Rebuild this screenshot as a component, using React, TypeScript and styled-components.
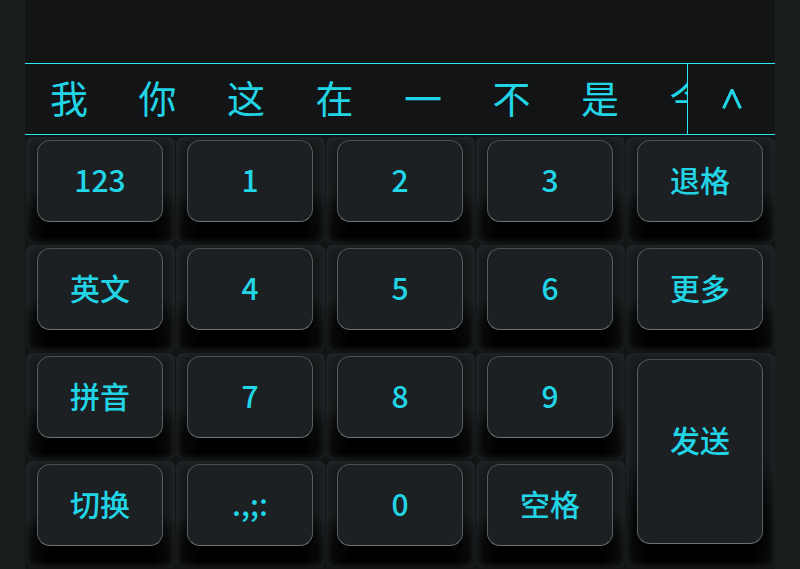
import React from "react";
import styled, { createGlobalStyle } from "styled-components";

const GlobalStyle = createGlobalStyle`
  html, body {
    margin: 0;
    padding: 0;
    background: #181d1d;
  }
  body {
    font-family: "Noto Sans CJK SC", "Noto Sans", sans-serif;
  }
`;

const Page = styled.div`
  width: 800px;
  height: 569px;
  display: flex;
  justify-content: center;
  background: #181d1d;
  overflow: hidden;
`;

const Panel = styled.div`
  width: 750px;
  height: 569px;
  background: #121416;
  display: flex;
  flex-direction: column;
`;

const TopSpace = styled.div`
  height: 63px;
`;

const CandidateBar = styled.div`
  height: 70px;
  border-top: 1px solid #2ae8ef;
  border-bottom: 1px solid #2ae8ef;
  display: flex;
`;

const CandidateList = styled.div`
  flex: 1;
  display: flex;
  align-items: center;
  gap: 50.5px;
  padding: 0 0 4px 25px;
  overflow: hidden;
  white-space: nowrap;
`;

const Candidate = styled.span`
  font-size: 38px;
  font-weight: 400;
  line-height: 1;
  color: #22d5e6;
  flex-shrink: 0;
`;

const ExpandButton = styled.div`
  width: 87px;
  border-left: 1px solid #2ae8ef;
  display: flex;
  align-items: center;
  justify-content: center;
  color: #22d5e6;
`;

const Keyboard = styled.div`
  flex: 1;
  padding: 2px 0 0 1px;
  display: grid;
  grid-template-columns: repeat(5, 149px);
  grid-template-rows: repeat(4, 107px);
  gap: 1px;
`;

const KeyCell = styled.div<{ $tall?: boolean }>`
  grid-row: ${({ $tall }) => ($tall ? "span 2" : "auto")};
  border-radius: 7px;
  background: radial-gradient(
    ellipse 68% 55% at 50% 90%,
    #000 50%,
    #0c0d0e 78%,
    #181b1c 100%
  );
  box-shadow: inset 0 0 9px rgba(42, 46, 48, 0.95);
  padding: ${({ $tall }) => ($tall ? "6px 12px 24px 11px" : "3px 12px 22px 11px")};
  display: flex;
`;

const KeyCap = styled.div<{ $tall?: boolean }>`
  flex: 1;
  border-radius: 13px;
  background: #1c2022;
  border: 1.5px solid #566061;
  border-bottom-color: #6a7574;
  border-top-color: #475051;
  display: flex;
  align-items: center;
  justify-content: center;
  padding-bottom: ${({ $tall }) => ($tall ? "26px" : "4px")};
  color: #22d5e6;
  font-size: 30px;
  font-weight: 500;
  line-height: 1;
  box-shadow: 0 2px 3px rgba(0, 0, 0, 0.6);
`;

const candidates = ["我", "你", "这", "在", "一", "不", "是", "今"];

type KeyDef = { label: string; tall?: boolean };

const keys: KeyDef[] = [
  { label: "123" },
  { label: "1" },
  { label: "2" },
  { label: "3" },
  { label: "退格" },
  { label: "英文" },
  { label: "4" },
  { label: "5" },
  { label: "6" },
  { label: "更多" },
  { label: "拼音" },
  { label: "7" },
  { label: "8" },
  { label: "9" },
  { label: "发送", tall: true },
  { label: "切换" },
  { label: ".,;:" },
  { label: "0" },
  { label: "空格" },
];

function ChevronUp() {
  return (
    <svg width="20" height="20" viewBox="0 0 20 20" fill="none">
      <polyline
        points="1.5,19.5 10,1 18.5,19.5"
        stroke="currentColor"
        strokeWidth="3"
        strokeLinejoin="miter"
      />
    </svg>
  );
}

export default function App() {
  return (
    <Page>
      <GlobalStyle />
      <Panel>
        <TopSpace />
        <CandidateBar>
          <CandidateList>
            {candidates.map((c) => (
              <Candidate key={c}>{c}</Candidate>
            ))}
          </CandidateList>
          <ExpandButton>
            <ChevronUp />
          </ExpandButton>
        </CandidateBar>
        <Keyboard>
          {keys.map((k) => (
            <KeyCell key={k.label} $tall={k.tall}>
              <KeyCap $tall={k.tall}>{k.label}</KeyCap>
            </KeyCell>
          ))}
        </Keyboard>
      </Panel>
    </Page>
  );
}
